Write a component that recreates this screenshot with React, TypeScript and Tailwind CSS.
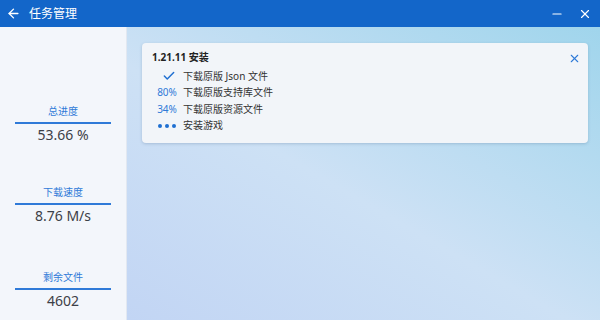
import { ArrowLeft, Minus, X, Check } from "lucide-react"

const stats = [
  { label: "总进度", value: "53.66 %", gap: 0 },
  { label: "下载速度", value: "8.76 M/s", gap: 39 },
  { label: "剩余文件", value: "4602", gap: 43 },
]

const steps: Array<{ mark: string; text: string }> = [
  { mark: "check", text: "下载原版 Json 文件" },
  { mark: "80%", text: "下载原版支持库文件" },
  { mark: "34%", text: "下载原版资源文件" },
  { mark: "dots", text: "安装游戏" },
]

function Mark({ mark }: { mark: string }) {
  if (mark === "check") return <Check size={14} strokeWidth={2.5} className="text-[#1f6fd1] ml-[3px]" />
  if (mark === "dots")
    return (
      <div className="flex gap-[3px]">
        <span className="w-[4px] h-[4px] rounded-full bg-[#1f6fd1]" />
        <span className="w-[4px] h-[4px] rounded-full bg-[#1f6fd1]" />
        <span className="w-[4px] h-[4px] rounded-full bg-[#1f6fd1]" />
      </div>
    )
  return <span className="text-[10px] text-[#2f7ad8]">{mark}</span>
}

export default function App() {
  return (
    <div
      className="w-[600px] h-[320px] flex flex-col overflow-hidden"
      style={{ fontFamily: '"Noto Sans", "Noto Sans CJK SC", sans-serif' }}
    >
      <div className="h-[27px] bg-[#1366c9] flex items-center text-white shrink-0">
        <ArrowLeft size={15} strokeWidth={2.2} className="ml-[6px]" />
        <span className="ml-[8px] text-[12px] leading-none">任务管理</span>
        <div className="ml-auto flex items-center gap-[14px] mr-[8px]">
          <Minus size={14} strokeWidth={2} />
          <X size={14} strokeWidth={2} />
        </div>
      </div>
      <div className="flex-1 flex min-h-0">
        <div className="w-[127px] bg-[#f3f6fb] border-r border-[#e2e8f1] flex flex-col items-center pt-[76px]">
          {stats.map((s) => (
            <div key={s.label} className="flex flex-col items-center" style={{ marginTop: s.gap }}>
              <span className="text-[10px] text-[#2f7ad8] leading-[16px]">{s.label}</span>
              <div className="w-[96px] h-[2px] bg-[#2f7ad8] mt-[3px]" />
              <span className="text-[14px] text-[#3c4047] leading-[20px] mt-[1px]">{s.value}</span>
            </div>
          ))}
        </div>
        <div className="flex-1 bg-[linear-gradient(30deg,#c2d5f4_0%,#cde1f5_45%,#a0d5ec_100%)] pl-[15px] pr-[12px] pt-[16px]">
          <div className="relative bg-[#f2f5f9] rounded-[4px] shadow-[0_1px_3px_rgba(60,90,130,0.25)] h-[100px] pl-[10px] pt-[6px]">
            <div className="text-[10px] font-bold text-[#222] leading-[16px]">1.21.11 安装</div>
            <X size={13} strokeWidth={2} className="absolute right-[7px] top-[9px] text-[#2f7ad8]" />
            <div className="mt-[3px] flex flex-col">
              {steps.map((s) => (
                <div key={s.text} className="flex items-center h-[16.5px]">
                  <div className="w-[30px] flex justify-center">
                    <Mark mark={s.mark} />
                  </div>
                  <span className="ml-[1px] text-[10px] text-[#333]">{s.text}</span>
                </div>
              ))}
            </div>
          </div>
        </div>
      </div>
    </div>
  )
}
